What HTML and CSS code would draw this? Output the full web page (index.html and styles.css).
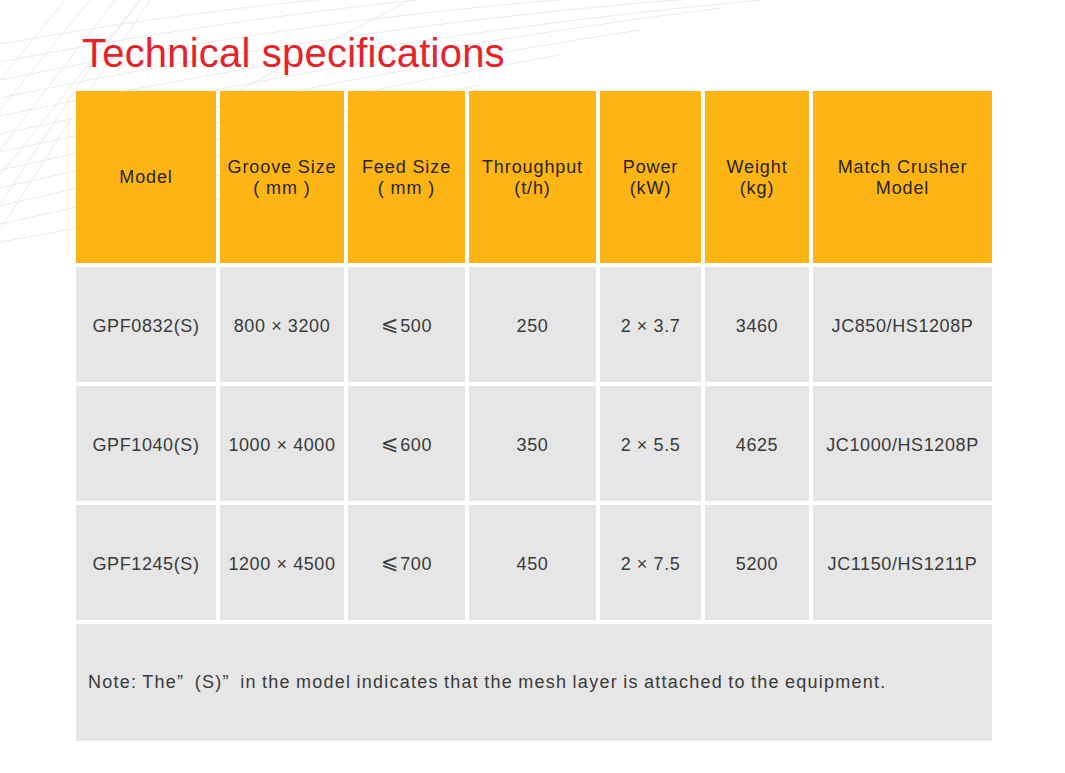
FILE: index.html
```html
<!DOCTYPE html>
<html lang="en">
<head>
<meta charset="utf-8">
<title>Technical specifications</title>
<link rel="stylesheet" href="styles.css">
</head>
<body>
<div class="page">
  <svg class="bg-lines" width="1065" height="773" viewBox="0 0 1065 773" aria-hidden="true">
    <g fill="none" stroke="#e8e8e8" stroke-width="0.9">
      <path d="M0 44 Q300 -10 620 -20"/>
      <path d="M0 62 Q320 0 660 -20"/>
      <path d="M0 80 Q340 10 700 -10"/>
      <path d="M0 98 Q360 22 740 -5"/>
      <path d="M0 116 Q380 36 760 0"/>
      <path d="M0 134 Q390 50 720 8"/>
      <path d="M0 152 Q380 70 640 30"/>
      <path d="M0 170 Q360 90 560 55"/>
      <path d="M0 188 Q320 115 480 85"/>
      <path d="M0 206 Q260 145 400 115"/>
      <path d="M0 224 Q200 180 330 150"/>
      <path d="M0 242 Q150 215 260 190"/>
      <path d="M0 150 L115 0"/>
      <path d="M0 175 L140 0"/>
      <path d="M0 205 L95 60 L140 0"/>
      <path d="M0 230 L70 120 L150 0"/>
      <path d="M0 110 L90 0"/>
      <path d="M0 80 L65 0"/>
      <path d="M240 90 Q330 40 420 -5"/>
    </g>
  </svg>

  <h1 class="title">Technical specifications</h1>

  <div class="spec-table">
    <div class="cell head">Model</div>
    <div class="cell head">Groove Size<br>( mm )</div>
    <div class="cell head">Feed Size<br>( mm )</div>
    <div class="cell head">Throughput<br>(t/h)</div>
    <div class="cell head">Power<br>(kW)</div>
    <div class="cell head">Weight<br>(kg)</div>
    <div class="cell head">Match Crusher<br>Model</div>

    <div class="cell">GPF0832(S)</div>
    <div class="cell">800 × 3200</div>
    <div class="cell"><span class="le">⩽</span>500</div>
    <div class="cell">250</div>
    <div class="cell">2 × 3.7</div>
    <div class="cell">3460</div>
    <div class="cell">JC850/HS1208P</div>

    <div class="cell">GPF1040(S)</div>
    <div class="cell">1000 × 4000</div>
    <div class="cell"><span class="le">⩽</span>600</div>
    <div class="cell">350</div>
    <div class="cell">2 × 5.5</div>
    <div class="cell">4625</div>
    <div class="cell">JC1000/HS1208P</div>

    <div class="cell">GPF1245(S)</div>
    <div class="cell">1200 × 4500</div>
    <div class="cell"><span class="le">⩽</span>700</div>
    <div class="cell">450</div>
    <div class="cell">2 × 7.5</div>
    <div class="cell">5200</div>
    <div class="cell">JC1150/HS1211P</div>

    <div class="cell note">Note: The”&nbsp;&nbsp;(S)”&nbsp;&nbsp;in the model indicates that the mesh layer is attached to the equipment.</div>
  </div>
</div>
</body>
</html>
```

FILE: styles.css
```css
html, body {
  margin: 0;
  padding: 0;
  background: #ffffff;
}

body {
  font-family: "Liberation Sans", Arial, sans-serif;
  color: #333333;
}

.page {
  position: relative;
  width: 1065px;
  height: 773px;
  overflow: hidden;
  padding: 29px 0 0 76px;
  box-sizing: border-box;
}

.bg-lines {
  position: absolute;
  left: 0;
  top: 0;
  z-index: 0;
  pointer-events: none;
}

.title {
  position: relative;
  z-index: 1;
  margin: 0 0 14px 6px;
  font-size: 40px;
  line-height: 48px;
  font-weight: normal;
  color: #e8212b;
  letter-spacing: 0.2px;
}

.spec-table {
  position: relative;
  z-index: 1;
  display: grid;
  grid-template-columns: 140px 124px 117px 127px 101px 104px 179px;
  grid-template-rows: 172px 115px 115px 115px 117px;
  gap: 4px;
  width: 916px;
}

.cell {
  display: flex;
  align-items: center;
  justify-content: center;
  text-align: center;
  background: #e6e6e6;
  font-size: 18px;
  letter-spacing: 0.6px;
  color: #3a3a3a;
  line-height: 21px;
  padding-top: 4px;
}

.cell .le {
  font-family: "DejaVu Sans", sans-serif;
  font-size: 21px;
  line-height: 21px;
  position: relative;
  top: -2px;
  margin-right: 1px;
}

.cell.head {
  background: #fdb515;
  color: #2a2419;
  letter-spacing: 0.9px;
  padding-top: 1px;
}

.cell.note {
  grid-column: 1 / -1;
  justify-content: flex-start;
  text-align: left;
  padding-left: 12px;
  padding-top: 0;
  font-size: 18px;
  letter-spacing: 1.25px;
  word-spacing: -1px;
}
```
